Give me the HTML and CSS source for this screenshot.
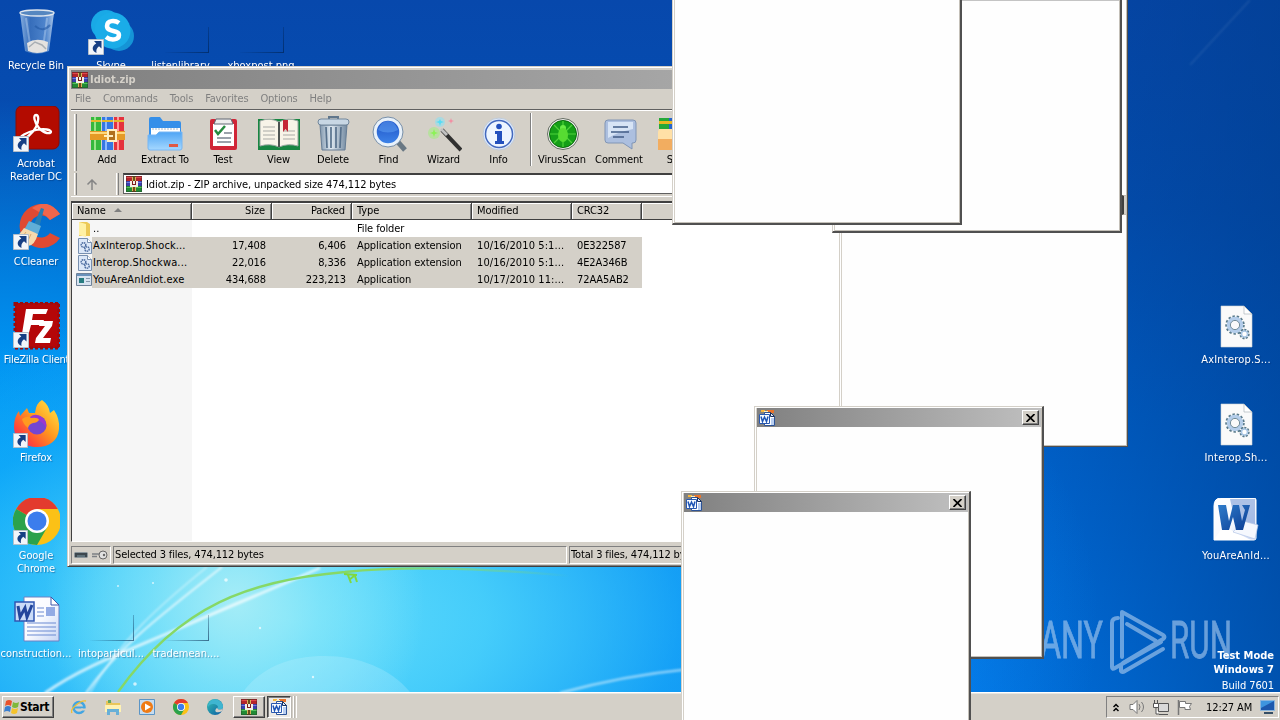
FILE: index.html
```html
<!DOCTYPE html>
<html lang="en">
<head>
	<meta charset="UTF-8">
	<title>Desktop</title>
	<link rel="stylesheet" href="styles.css">
</head>
<body>
	<!-- shared icons -->
	<svg class="defs" width="0" height="0">
		<defs>
			<linearGradient id="gBlue" x1="0" y1="0" x2="0" y2="1"><stop offset="0" stop-color="#4fa5f5"/><stop offset="1" stop-color="#a5d8ff"/></linearGradient>
			<linearGradient id="gMetal" x1="0" y1="0" x2="1" y2="0"><stop offset="0" stop-color="#8298ae"/><stop offset=".4" stop-color="#e0eaf2"/><stop offset="1" stop-color="#7289a0"/></linearGradient>
			<linearGradient id="gPage" x1="0" y1="0" x2="1" y2="1"><stop offset="0" stop-color="#fff"/><stop offset=".5" stop-color="#f8faff"/><stop offset="1" stop-color="#c5d4f4"/></linearGradient>
			<linearGradient id="gFire" x1="1" y1="0" x2="0" y2="1"><stop offset="0" stop-color="#fff04a"/><stop offset=".45" stop-color="#ff9a1f"/><stop offset=".75" stop-color="#ff4b37"/><stop offset="1" stop-color="#e31587"/></linearGradient>
			<linearGradient id="gW" x1="0" y1="0" x2="1" y2="1"><stop offset="0" stop-color="#2f7ccb"/><stop offset="1" stop-color="#0b3c93"/></linearGradient>
			<linearGradient id="gEdge" x1="0" y1="0" x2="1" y2="1"><stop offset="0" stop-color="#35c1b1"/><stop offset="1" stop-color="#0c59a4"/></linearGradient>
			<linearGradient id="gGlass" x1="0" y1="0" x2="1" y2="0"><stop offset="0" stop-color="#9dc0e8"/><stop offset=".3" stop-color="#3f74bd"/><stop offset=".75" stop-color="#5b8fd2"/><stop offset="1" stop-color="#c5daf2"/></linearGradient>
			<linearGradient id="gFind" x1="0" y1="0" x2="0" y2="1"><stop offset="0" stop-color="#1d4fc4"/><stop offset="1" stop-color="#3f86ea"/></linearGradient>
			<linearGradient id="gStem" x1="0" y1="0" x2="1" y2="0"><stop offset="0" stop-color="#86d866"/><stop offset=".6" stop-color="#86d866"/><stop offset="1" stop-color="#86d866" stop-opacity="0"/></linearGradient>
		</defs>
		<symbol id="rar" viewBox="0 0 16 16">
			<path fill="#b3242b" d="M0 0h16v5H0z"/><path fill="#3b3fae" d="M0 5h16v5H0z"/><path fill="#218a34" d="M0 10h16v6H0z"/>
			<path fill="#e0484c" d="M0 1h16v1H0z"/><path fill="#6f7be0" d="M0 6h16v1H0z"/><path fill="#54c25e" d="M0 11h16v1H0z"/>
			<path fill="#6d4c1e" d="M6 0h4v16H6z"/><path fill="#d9b458" d="M6 1h1v14H6zM9 1h1v14H9z"/>
			<path fill="#f3f0e5" d="M4 5h8v6H4z"/><path fill="#7d1a1d" d="M6 5h1v4H6zM9 5h1v4H9zM7 8h2v1H7z"/>
			<path fill="none" stroke="#252525" d="M.5.5h15v15H.5z" opacity=".3"/>
		</symbol>
		<symbol id="wdoc" viewBox="0 0 16 16">
			<path fill="#f6b73c" d="M2 0h4v2H2z"/><path fill="#e8742c" d="M8 0h7v3H8z"/><path fill="#fff1ba" d="M5 1h4v1H5z"/>
			<path fill="#fff" stroke="#2c5397" d="M5.500 2.500h6l4 4v9h-10z"/><path fill="#b9cff2" d="M12 8h3v7h-3z"/><path stroke="#17305f" fill="#dfe9fb" d="M11.500 2.500v4h4z"/>
			<path fill="#f9fcff" stroke="#2858b0" d="M.5 4.500h10v9H.5z"/><path fill="none" stroke="#1d54b5" stroke-width="1.500" d="M2 6.500l1.500 5L5.500 7l2 4.500L9 6.500"/>
		</symbol>
		<symbol id="arrow" viewBox="0 0 16 16">
			<path fill="#f2f5fa" stroke="#b5bec9" d="M.5.5h15v15h-15z"/>
			<path fill="#173f84" d="M6 2h7.500v7.500L11 7.200C8.500 9 8 11 8.500 14 3.500 11.500 3.500 7 8.300 4.400z"/>
		</symbol>
		<symbol id="gears" viewBox="12 0 48 48">
			<path fill="#fafafa" stroke="#cfd3d6" stroke-width=".6" d="M21 4h23l8 8v33H21z"/>
			<path fill="#fff" stroke="#aeb5ba" stroke-width=".7" d="M44 4v8h8z"/>
			<circle cx="35" cy="23" r="8" fill="none" stroke="#58798a" stroke-width="3.500" stroke-dasharray="2.200 1.700"/>
			<circle cx="35" cy="23" r="6.500" fill="none" stroke="#b4cdea" stroke-width="3.500"/>
			<circle cx="35" cy="23" r="4.600" fill="none" stroke="#567482" stroke-width=".8"/>
			<circle cx="44.500" cy="32" r="3.700" fill="#fff" stroke="#58798a" stroke-width="3" stroke-dasharray="1.800 1"/>
			<circle cx="44.500" cy="32" r="3" fill="#fff" stroke="#a9c6e4" stroke-width="1.500"/>
		</symbol>
		<symbol id="chrome" viewBox="0 0 48 48">
			<circle cx="24" cy="24" r="24" fill="#fbc116"/>
			<path fill="#e33b2e" d="M24 24L3.200 12A24 24 0 0 1 44.800 12H24z"/>
			<path fill="#2ba24c" d="M24 24L3.200 12A24 24 0 0 0 24 48l10.400-18z"/>
			<circle cx="24" cy="24" r="12" fill="#fff"/><circle cx="24" cy="24" r="9.500" fill="#3b7ded"/>
		</symbol>
		<symbol id="dll" viewBox="0 0 14 16">
			<path fill="#dce8f8" stroke="#7890b0" d="M.5.5h9l4 4v11H.5z"/><path fill="#fff" stroke="#7890b0" d="M9.500.5v4h4"/>
			<circle cx="5.500" cy="7" r="2.300" fill="none" stroke="#4d6da0" stroke-width="1.500" stroke-dasharray="1.400 .6"/><circle cx="9" cy="11" r="2.200" fill="none" stroke="#4d6da0" stroke-width="1.500" stroke-dasharray="1.400 .6"/>
		</symbol>
	</svg>

	<div class="desktop">
		<!-- wallpaper light streaks -->
		<svg class="streaks" width="1280" height="692" viewBox="0 0 1280 692">
			<defs><filter id="soft"><feGaussianBlur stdDeviation=".8"/></filter></defs>
			<g fill="none" stroke="#fff" filter="url(#soft)">
				<path d="M45 693C85 665 130 650 180 628S270 590 320 568" stroke-width="3" opacity=".7"/>
				<path d="M86 693C120 645 165 612 222 567" stroke-width="2" opacity=".7"/>
				<path d="M90 693C120 640 160 605 207 567" stroke-width="1.500" opacity=".5"/>
				<path d="M560 693C600 682 640 674 690 669" stroke-width="2.500" opacity=".5"/>
				<path d="M1190 65L1250 0" stroke-width="2" opacity=".08"/>
			</g>
			<path d="M243 692C262 666 292 656 325 656S390 668 410 692z" fill="#d5f8ff" opacity=".22"/>
			<path d="M118 692C180 605 250 580 345 572 400 566 470 567 570 576" fill="none" stroke="url(#gStem)" stroke-width="2.300"/>
			<path d="M344 574l13 1M348 575l3 8M355 576l2 6M349 580l5-4" stroke="#80d83e" stroke-width="2"/>
			<g fill="#fff" opacity=".7"><circle cx="226" cy="580" r="1.800"/><circle cx="118" cy="586" r="1"/><circle cx="135" cy="684" r="1.800"/><circle cx="153" cy="583" r="1"/><circle cx="260" cy="628" r="1.200"/><circle cx="313" cy="677" r="1.200"/></g>
		</svg>

		<div class="icons col1">
			<div class="item">
				<svg class="pic" viewBox="0 0 48 48">
					<path d="M7 4l5 38q11 6 24 0l5-38q-16-5-34 0z" transform="translate(1 1)" fill="url(#gGlass)" opacity=".85"/>
					<path d="M14 34q9-6 21-1l-1 9q-10 4-19 0z" transform="translate(1 1)" fill="#e4e2df"/><path d="M17 39l6-5 7 3 4 4" fill="none" stroke="#a8aeb3" stroke-width="1.500"/>
					<ellipse cx="25" cy="5" rx="17" ry="3" fill="#5687c0" stroke="#dfe6ee" stroke-width="1.400"/>
					<path d="M14 10l4 26M35 10l-3 23" stroke="#dcebfb" opacity=".35" stroke-width="2"/>
					<path d="M23 18q8 7 15-1" fill="none" stroke="#2258a5" opacity=".6" stroke-width="2"/>
				</svg>
				<span>Recycle Bin</span>
			</div>
			<div class="item">
				<svg class="pic" viewBox="0 0 48 48">
					<rect x="4" y="0" width="43" height="43" rx="6" fill="#b30b00" stroke="#8c0a02"/>
					<path d="M24 9c3 0 3 6 0 12S12 35 9 33s6-7 15-9 15 0 15 2-7 2-12-4-6-13-3-13z" fill="none" stroke="#fff" stroke-width="2.300"/>
					<use href="#arrow" x="1" y="30" width="16" height="16"/>
				</svg>
				<span>Acrobat<br>Reader DC</span>
			</div>
			<div class="item">
				<svg class="pic" viewBox="0 0 48 48">
					<path d="M48 10A22 22 0 1 0 48 34L38 29A11 11 0 1 1 38 16z" fill="#e04a32"/>
					<path d="M48 10Q36-7 20 4l14 8 4 4z" fill="#f0664c"/>
					<path d="M29 4l3 1-6 23-6-3z" fill="#277db2"/><path d="M17 17l12 5-3 8-14-4z" fill="#60aed7"/>
					<path d="M12 24l14 6q-4 13-11 12L3 34q4-3 9-10z" fill="#f6d9ac"/><path d="M14 28l-6 8M19 30l-4 9" stroke="#dba96c"/>
					<use href="#arrow" x="1" y="30" width="16" height="16"/>
				</svg>
				<span>CCleaner</span>
			</div>
			<div class="item">
				<svg class="pic" viewBox="0 0 48 48">
					<rect x="3" y="1" width="44" height="45" fill="#b50709" stroke="#980c0e" stroke-width="3" stroke-dasharray="3 2"/>
					<path d="M14 7h22l-2 5H21l-1 6h12l-2 5H19l-4 15H9z" fill="#fff"/><path d="M28 19h13l-1 5-9 12h8l-1 5H23l1-5 9-12h-6z" fill="#fff"/>
					<use href="#arrow" x="1" y="30" width="16" height="16"/>
				</svg>
				<span class="tight">FileZilla Client</span>
			</div>
			<div class="item">
				<svg class="pic" viewBox="0 0 48 48">
					<path d="M30 0q7 5 8 13l4-3q6 9 5 19c-1 12-10 18-22 18S2 40 2 27q0-10 5-16l1 5 7-8 2 5 6 0Q24 3 30 0z" fill="url(#gFire)"/>
					<circle cx="25" cy="25" r="9.500" fill="#7446d1"/><path d="M18 17q6-5 13 1 4 5 3 10-4-8-11-8l-7 4z" fill="#9b37cf"/>
					<path d="M10 19q6-4 9-1 7-1 8 2-2 3-6 3-4 1-5 5-5-4-6-9z" fill="#ff9a20"/>
					<use href="#arrow" x="1" y="33" width="15" height="15"/>
				</svg>
				<span>Firefox</span>
			</div>
			<div class="item">
				<svg class="pic" viewBox="0 0 48 48"><use href="#chrome" x="1" y="-1" width="48" height="48"/><use href="#arrow" x="1" y="32" width="15" height="15"/></svg>
				<span>Google<br>Chrome</span>
			</div>
			<div class="item">
				<svg class="pic" viewBox="0 0 48 48">
					<path d="M12 1h27l8 8v36H12z" fill="url(#gPage)" stroke="#6f81c4"/><path d="M39 1v8h8z" fill="#fff" stroke="#3d57a8"/>
					<path d="M25 12h7M25 16h7M25 20h7M15 27h29M15 31h29M15 35h29M15 39h29" stroke="#6a8ad2" stroke-width="1.200"/><path d="M34 11h9v9h-9z" fill="#93abe4"/>
					<path d="M3 6h19v19H3z" fill="#cbdcf8" stroke="#3157b3" stroke-width="1.500"/><path d="M6 10l2 11 5-9 2 9 5-12" fill="none" stroke="#23469c" stroke-width="3"/>
				</svg>
				<span class="wide">construction...</span>
			</div>
		</div>
		<div class="icons col2">
			<div class="item">
				<svg class="pic" viewBox="0 0 48 48">
					<circle cx="19" cy="17" r="15" fill="#19a9e6"/><circle cx="32" cy="28" r="15" fill="#1594d6"/><circle cx="25.500" cy="22.500" r="18" fill="#1aace8"/>
					<path d="M32 15c-4-3-12-3-12 3 0 7 12 3 12 9 0 5-8 6-13 2" fill="none" stroke="#fff" stroke-width="4.500"/>
					<use href="#arrow" x="1" y="31" width="16" height="16"/>
				</svg>
				<span>Skype</span>
			</div>
			<div class="item last"><i class="ghost"></i><span class="wide">intoparticul...</span></div>
		</div>
		<div class="icons col3">
			<div class="item"><i class="ghost"></i><span class="wide">listenlibrary....</span></div>
			<div class="item last"><i class="ghost"></i><span class="wide">trademean....</span></div>
		</div>
		<div class="icons col4">
			<div class="item"><i class="ghost"></i><span class="wide">xboxpost.png</span></div>
		</div>
		<div class="icons right">
			<div class="item"><svg class="pic"><use href="#gears" width="48" height="48"/></svg><span class="far">AxInterop.S...</span></div>
			<div class="item"><svg class="pic"><use href="#gears" width="48" height="48"/></svg><span class="far">Interop.Sh...</span></div>
			<div class="item">
				<svg class="pic" viewBox="0 0 48 48">
					<path d="M9 0h33q2 0 2 2v38q0 2-2 2H2V8q0-8 7-8z" fill="url(#gPage)" stroke="#fff"/><path d="M18 1h25v31H25z" fill="#8ca8dc" opacity=".7"/>
					<path d="M2 42l9-14 28 14z" fill="#fff"/><path d="M31 23l15 4-3 14-22-7z" fill="#f5f8fe" stroke="#b4c5e7" stroke-width=".7"/>
					<path d="M6 7h8l3 16 4-16h6l3 16 3-11-3-5h8l-7 25h-7l-3-13-4 13h-7z" fill="url(#gW)"/>
				</svg>
				<span class="far">YouAreAnId...</span>
			</div>
		</div>

		<!-- watermark -->
		<svg class="brand" width="200" height="70" viewBox="0 0 200 70">
			<text x="0" y="53" textLength="63" lengthAdjust="spacingAndGlyphs">ANY</text>
			<text x="130" y="53" textLength="62" lengthAdjust="spacingAndGlyphs">RUN</text>
			<g fill="none" stroke-width="4" stroke-linejoin="round" stroke-linecap="round">
				<path d="M78 13q-6 0-6 5v44q0 3 3 1l46-26"/><path d="M82 52V7l41 23q3 2 0 4L83 58"/><path d="M87 19l29 17"/><path d="M81 61v5q1 2 4 0l38-22"/>
			</g>
		</svg>
		<div class="build"><b>Test Mode</b><b>Windows 7</b><span>Build 7601</span></div>
	</div>

	<!-- archive manager -->
	<div class="archive">
		<div class="titlebar"><svg width="16" height="16"><use href="#rar"/></svg><b>Idiot.zip</b></div>
		<div class="menu"><span>File</span><span>Commands</span><span>Tools</span><span>Favorites</span><span>Options</span><span>Help</span></div>
		<div class="toolbar">
			<i class="grip"></i>
			<div class="tool w58">
				<svg viewBox="-1 0 36 36"><path fill="#35b83c" d="M1 1h10v33H1z"/><path fill="#3577e2" d="M12 1h11v33H12z"/><path fill="#e5323d" d="M24 1h10v33H24z"/><path fill="#96e488" d="M4 1h2v33H4z"/><path fill="#89b8ff" d="M15 1h2v33h-2z"/><path fill="#ff9899" d="M27 1h2v33h-2z"/><path fill="#e5b729" d="M1 4h10v2H1zM12 4h11v2H12zM24 4h10v2H24z"/><path fill="#e59a26" d="M0 15h35v9H0z"/><path fill="#ffd87c" d="M0 16h35v2H0z"/><path fill="#b0701e" stroke="#fff0c0" stroke-width="2" d="M18 14h8v11h-8z"/><path d="M14 20h9" stroke="#fff0c0" stroke-width="2"/></svg>
				<span>Add</span>
			</div>
			<div class="tool w58">
				<svg viewBox="-1 0 36 36"><path fill="#358fe9" d="M1 3q0-2 2-2h9l3 4h16q2 0 2 2v20H1z"/><path fill="#fff" d="M3 12h29v8H3z"/><path d="M4 13h27" stroke="#a9bacb" stroke-dasharray="2 1"/><path fill="url(#gBlue)" stroke="#76b6f4" d="M0 19h8l3-3h23v16q0 2-2 2H2q-2 0-2-2z"/><path fill="#df5944" d="M21 28h9v3h-9z"/></svg>
				<span>Extract To</span>
			</div>
			<div class="tool w58">
				<svg viewBox="0 0 36 36"><rect x="5" y="3" width="27" height="31" rx="2" fill="#d02637"/><path fill="#fff" d="M8 8h21v22H8z"/><path fill="#eee" stroke="#626974" d="M11 3h15l2 5H9z"/><path d="M10 14l3 4 7-8" fill="none" stroke="#258a3f" stroke-width="2.500"/><path d="M19 17h8M12 22h14M12 26h14" stroke="#7b8490" stroke-width="1.300"/></svg>
				<span>Test</span>
			</div>
			<div class="tool w53">
				<svg class="wide" viewBox="0 0 42 36"><path fill="#188642" d="M0 3h42v31H0z"/><path fill="#f8f4e8" stroke="#9da8a3" d="M2 5q10-4 19 1v25q-9-4-19-1zM40 5q-10-4-19 1v25q9-4 19-1z"/><path d="M5 11h12M5 15h12M5 19h12M5 23h12M25 19h12M25 23h12M25 15h12" stroke="#a9aaa6"/><path d="M21 6v25" stroke="#4e5452" stroke-width="2"/><path fill="#c52737" d="M25 4h5v12l-2.500-3L25 16z"/></svg>
				<span>View</span>
			</div>
			<div class="tool w56">
				<svg viewBox="0 0 36 36"><path d="M14 3V1h9v2" fill="none" stroke="#60768b" stroke-width="2"/><path fill="url(#gMetal)" stroke="#667d95" d="M5 9h27l-2 25H7z"/><path d="M11 11l1 21M16 11v21M21 11v21M26 11l-1 21" stroke="#57718c" stroke-width="1.700"/><rect x="3" y="3" width="31" height="6" rx="3" fill="#c8d7e4" stroke="#72879b"/></svg>
				<span>Delete</span>
			</div>
			<div class="tool w55">
				<svg viewBox="0 0 36 36"><path d="M26 25l8 9" stroke="#697884" stroke-width="5"/><circle cx="17" cy="16" r="13" fill="url(#gFind)" stroke="#e8f1fa" stroke-width="3.500"/><circle cx="17" cy="16" r="15" fill="none" stroke="#7890ab"/><path d="M7 14q10 5 20 0-3-9-10-9T7 14z" fill="#72b6ff" opacity=".4"/></svg>
				<span>Find</span>
			</div>
			<div class="tool w55">
				<svg viewBox="0 0 36 36"><path d="M16 14l19 20" stroke="#303030" stroke-width="4"/><path d="M15 13l6 6" stroke="#c2c2c2" stroke-width="3"/><circle cx="8" cy="17" r="6" fill="#9bf176" opacity=".5"/><circle cx="14" cy="6" r="5" fill="#7fe4fa" opacity=".5"/><path d="M8 13l1 3 3 1-3 1-1 3-1-3-3-1 3-1z" fill="#8bf356"/><path d="M14 3l1 2 3 1-3 1-1 3-1-3-3-1 3-1z" fill="#55dbf5"/><path d="M25 2l.7 2.300L28 5l-2.300.7L25 8l-.7-2.300L22 5l2.300-.7z" fill="#f58aa0"/></svg>
				<span>Wizard</span>
			</div>
			<div class="tool w55">
				<svg viewBox="0 0 36 36"><circle cx="18" cy="18" r="16" fill="#dce8fa" stroke="#bfcbd9"/><circle cx="18" cy="18" r="13.500" fill="#edf5ff" stroke="#4369be" stroke-width="1.500"/><circle cx="18" cy="10.500" r="2.800" fill="#2250bd"/><path d="M14 15h7v10h2v3h-9v-3h2v-7h-2z" fill="#2250bd"/></svg>
				<span>Info</span>
			</div>
			<i class="sep"></i>
			<div class="tool w56">
				<svg viewBox="-1 0 36 36"><circle cx="18" cy="18" r="15.500" fill="#eee" stroke="#656d62"/><circle cx="18" cy="18" r="13.500" fill="#159f18" stroke="#086d0b"/><path d="M18 5v26M5 18h26M9 9l18 18M27 9L9 27" stroke="#4fd33a" stroke-width="1.200"/><circle cx="18" cy="12" r="3" fill="#68eb45"/><ellipse cx="18" cy="19" rx="5" ry="7" fill="#57dc32"/></svg>
				<span>VirusScan</span>
			</div>
			<div class="tool w58">
				<svg viewBox="-1 0 36 36"><path d="M6 4h25q3 0 3 3v17q0 3-3 3h-1v6l-9-6H6q-3 0-3-3V7q0-3 3-3z" fill="#acbfdf" stroke="#8095b5"/><path d="M6 6h25v7q-15 3-25 9z" fill="#d7e4f5"/><path d="M11 11h15M9 16h18M11 21h11" stroke="#425c86" stroke-width="1.700"/></svg>
				<span>Comment</span>
			</div>
			<div class="tool w56">
				<svg viewBox="2 0 36 36"><path fill="#25a83a" d="M3 2h12v15H3z"/><path fill="#2665ce" d="M13 2h10v15H13z"/><path fill="#d5333e" d="M23 2h9v15h-9z"/><path fill="#e9b721" d="M3 5h29v3H3z"/><path fill="#f2ad60" d="M1 17h32v17H1z"/><path fill="#ffe0a6" d="M3 13l-4 10h31l3-10z"/></svg>
				<span>SFX</span>
			</div>
		</div>
		<div class="address">
			<i class="grip"></i><div class="up">
				<svg width="12" height="11" viewBox="0 0 12 11"><path d="M6 11V1M1.500 5.500L6 1l4.500 4.500" fill="none" stroke="#858585" stroke-width="1.500"/></svg>
			</div><i class="grip"></i>
			<div class="path"><svg width="16" height="16"><use href="#rar"/></svg><span>Idiot.zip - ZIP archive, unpacked size 474,112 bytes</span></div>
		</div>
		<div class="list">
			<div class="row head"><span>Name <i class="sort"></i></span><span class="num">Size</span><span class="num">Packed</span><span>Type</span><span>Modified</span><span>CRC32</span><span></span></div>
			<div class="row"><span class="name"><svg width="14" height="16" viewBox="0 0 14 16"><path fill="#ecc957" d="M1 1h8l3 2v12H1z"/><path fill="#fff1a5" d="M1 1l7 2v13l-7-2z"/></svg><em>..</em></span><span></span><span></span><span>File folder</span><span></span><span></span></div>
			<div class="row sel"><span class="name"><svg width="14" height="16"><use href="#dll"/></svg><em>AxInterop.Shock...</em></span><span class="num">17,408</span><span class="num">6,406</span><span>Application extension</span><span class="date">10/16/2010 5:1...</span><span>0E322587</span></div>
			<div class="row sel"><span class="name"><svg width="14" height="16"><use href="#dll"/></svg><em>Interop.Shockwa...</em></span><span class="num">22,016</span><span class="num">8,336</span><span>Application extension</span><span class="date">10/16/2010 5:1...</span><span>4E2A346B</span></div>
			<div class="row sel"><span class="name"><svg width="16" height="14" viewBox="0 0 16 14"><path fill="#d7e3f0" stroke="#6f8299" d="M.5.5h15v12H.5z"/><path fill="#6a92bb" d="M1 1h14v2H1z"/><path fill="#287c80" d="M3 5h5v5H3z"/><path stroke="#8699ad" d="M10 5.500h4M10 8.500h4"/></svg><em>YouAreAnIdiot.exe</em></span><span class="num">434,688</span><span class="num">223,213</span><span>Application</span><span class="date">10/17/2010 11:...</span><span>72AA5AB2</span></div>
			<div class="fill"></div>
		</div>
		<div class="status">
			<div class="pane small"><svg width="34" height="12" viewBox="0 0 34 12"><rect x=".5" y="3.500" width="13" height="5" rx="1" fill="#3d474e" stroke="#8b969c"/><path d="M3 7h8" stroke="#7f9aa3"/><path d="M18 5h7M18 7.500h5" stroke="#7c8084" stroke-width="1.500"/><circle cx="29" cy="6" r="4" fill="#e1e1e1" stroke="#666"/><circle cx="30" cy="6" r="1.200" fill="#666"/></svg></div>
			<div class="pane mid">Selected 3 files, 474,112 bytes</div>
			<div class="pane end">Total 3 files, 474,112 bytes</div>
		</div>
	</div>

	<div class="taskbar">
		<div class="start">
			<svg width="17" height="16" viewBox="0 0 17 16"><path fill="#e9522b" d="M3 2q3-2 6 0L8 7Q5 5 2 7z"/><path fill="#7fb83a" d="M10 3q3 2 6 0l-1 5q-3 2-6 0z"/><path fill="#3a7fd0" d="M2 8q3-2 6 0l-1 5q-3-2-6 0z"/><path fill="#f5c32b" d="M9 9q3 2 6 0l-1 5q-3 2-6 0z"/></svg>
			<b>Start</b>
		</div>
		<div class="quick">
			<svg viewBox="0 0 16 16"><circle cx="8" cy="8.500" r="5.500" fill="none" stroke="#42a5e2" stroke-width="2.500"/><path d="M3 8.500h10" stroke="#42a5e2" stroke-width="2"/><path d="M10 9.500h5v2h-5z" fill="#d4d0c8"/><path d="M1 14q-2-3 4-8t10-4" fill="none" stroke="#efbf35" stroke-width="1.300"/></svg>
			<svg viewBox="0 0 16 16"><path fill="#e9c65a" d="M1 2h5l1 2h8v9H1z"/><path fill="#fff2b3" d="M0 6h16v7H0z"/><path fill="#67afd7" d="M2 10h12v6h-3v-3H5v3H2z"/><path fill="#61a75c" d="M3 1h3v3H3z"/></svg>
			<svg viewBox="0 0 16 16"><path fill="#c7dcef" stroke="#5b95c6" d="M.5.5h15v15H.5z"/><circle cx="8" cy="8" r="6" fill="#ef7b15"/><path fill="#fff" d="M6 4.500l6 3.500-6 3.500z"/></svg>
			<svg viewBox="0 0 16 16"><use href="#chrome" width="16" height="16"/></svg>
			<svg viewBox="0 0 16 16"><circle cx="8" cy="8" r="8" fill="url(#gEdge)"/><path d="M4 1.500Q8-1 12 1.500t4 6q0 3-3 3-3 0-2-2 0-3-4-3.500T1 8q0-4 3-6.500z" fill="#3fb5d0"/><path d="M10.500 8.500q-.5 2 2.500 2 2 0 3-1.500l-1 3q-3 2-6 1-2-2 1.500-4.500z" fill="#d4d0c8"/></svg>
		</div>
		<div class="task"><svg width="16" height="16"><use href="#rar"/></svg></div>
		<div class="task active"><svg width="16" height="16"><use href="#wdoc"/></svg></div>
		<i class="bar"></i><i class="bar"></i>
		<div class="tray">
			<svg width="6" height="9" viewBox="0 0 6 9"><path d="M.5 4L3 1.500 5.500 4M.5 8L3 5.500 5.500 8" fill="none" stroke="#000" stroke-width="1.500"/></svg>
			<svg width="16" height="14" viewBox="0 0 16 14"><path d="M1 4.500h3l4-4v13l-4-4H1z" fill="#fff" stroke="#777"/><path d="M10 4q2 3 0 6M12.500 2q4 5 0 10" fill="none" stroke="#777"/></svg>
			<svg width="16" height="15" viewBox="0 0 16 15"><path d="M5.500 3.500h10v8h-10z" fill="#d9d9d9" stroke="#555"/><path d="M6 14.500h9M1.500 0v4M4.500 0v4M.5 3.500h5v4h-5zM3 8v6h3" fill="#fff" stroke="#555"/></svg>
			<svg width="16" height="15" viewBox="0 0 16 15"><path d="M1.500 0v15" stroke="#777" stroke-width="1.500"/><path d="M2.500 1.500h6v2h6l-2 3 1 3H8v-2H2.500z" fill="#fff" stroke="#777"/></svg>
			<span>12:27 AM</span>
			<svg width="15" height="14" viewBox="0 0 15 14"><path fill="#1d58ad" stroke="#8bb5dc" d="M.5.5h14v10H.5z"/><path fill="#3e95df" d="M1 1h13L1 8z"/><path fill="#354e66" d="M4 12h9v2H4z"/></svg>
		</div>
	</div>

	<!-- popups, back to front -->
	<div class="popup p1"><i class="edge"></i></div>
	<div class="popup p2"></div>
	<div class="popup p3"></div>
	<div class="popup p4">
		<div class="ptitle"><svg width="16" height="16"><use href="#wdoc"/></svg><i class="close"><svg width="9" height="8" viewBox="0 0 9 8"><path d="M.5 0l8 8M8.500 0l-8 8" stroke="#000" stroke-width="1.700"/></svg></i></div>
	</div>
	<div class="popup p5">
		<div class="ptitle"><svg width="16" height="16"><use href="#wdoc"/></svg><i class="close"><svg width="9" height="8" viewBox="0 0 9 8"><path d="M.5 0l8 8M8.500 0l-8 8" stroke="#000" stroke-width="1.700"/></svg></i></div>
	</div>
</body>
</html>
```
FILE: styles.css
```css
*{
	padding:0;
	margin:0;
	box-sizing:border-box;
}
body{
	width:1280px;
	height:720px;
	overflow:hidden;
	position:relative;
	font-family:"DejaVu Sans Condensed","DejaVu Sans",sans-serif;
	font-size:11px;
	line-height:13px;
	letter-spacing:-0.1px;
	color:#000;
	white-space:nowrap;
}
b{
	letter-spacing:.2px;
}
svg{
	display:block;
	flex:none;
}
i,em{
	font-style:normal;
	flex:none;
}
.defs{
	position:absolute;
}
.desktop{
	position:absolute;
	left:0;
	top:0;
	width:1280px;
	height:692px;
	overflow:hidden;
	background:
		radial-gradient(ellipse 190px 200px at 235px 600px, rgba(178,240,246,.85) 0%, rgba(150,235,248,.55) 45%, rgba(110,220,250,0) 100%),
		radial-gradient(ellipse 560px 320px at 290px 620px, rgba(100,222,252,1) 0%, rgba(75,212,251,.85) 35%, rgba(25,175,250,.55) 70%, rgba(0,150,240,0) 100%),
		radial-gradient(ellipse 620px 420px at 480px 620px, rgba(35,165,250,.95) 0%, rgba(15,145,245,.7) 45%, rgba(0,120,230,0) 100%),
		radial-gradient(ellipse 500px 420px at 0 520px, #00a8f8 0%, rgba(0,152,245,.9) 40%, rgba(0,110,220,0) 100%),
		linear-gradient(90deg, rgba(0,60,140,0) 75%, rgba(0,60,140,.6) 100%),
		linear-gradient(180deg, #0748ac 0%, #0450b4 30%, #0062cc 60%, #0074e4 100%);
}
.streaks{
	position:absolute;
	left:0;
	top:0;
}
.icons{
	position:absolute;
	top:8px;
	width:72px;
	height:684px;
	display:flex;
	flex-direction:column;
	color:#fff;
	text-shadow:1px 1px 1px rgba(0,30,80,.4);
}
.col1{ left:0; }
.col2{ left:75px; }
.col3{ left:150px; }
.col4{ left:225px; }
.right{
	left:1200px;
	top:302px;
	height:auto;
}
.item{
	height:98px;
	flex:none;
	display:flex;
	flex-direction:column;
	align-items:center;
	text-align:center;
}
.item.last{
	margin-top:490px;
}
.pic{
	width:48px;
	height:48px;
	margin-bottom:3px;
}
.item .wide{
	letter-spacing:0;
}
.item .far{
	letter-spacing:.2px;
}
.item .tight{
	letter-spacing:-.25px;
	padding-left:1px;
}
.ghost{
	width:44px;
	height:26px;
	margin:19px 0 6px 2px;
	border:solid rgba(0,30,70,.4);
	border-width:0 1px 1px 0;
	border-image:linear-gradient(135deg, transparent 35%, rgba(0,30,70,.6)) 1;
}
.brand{
	position:absolute;
	left:1040px;
	top:605px;
	opacity:.6;
	overflow:visible;
}
.brand text{
	font-family:Roboto,sans-serif;
	font-size:52px;
	letter-spacing:0;
	fill:#b0cff0;
	stroke:#b0cff0;
	stroke-width:.8px;
}
.brand g{
	stroke:#b0cff0;
}
.build{
	position:absolute;
	right:6px;
	top:649px;
	display:flex;
	flex-direction:column;
	align-items:flex-end;
	color:#fff;
	line-height:14px;
}
.build b{
	letter-spacing:0;
}
.build span{
	margin-top:2px;
}

/* archive window */
.archive{
	position:absolute;
	left:67px;
	top:66px;
	width:900px;
	height:501px;
	padding:2px 2px 1px 3px;
	background:#d4d0c8;
	border:1px solid #d4d0c8;
	border-right-color:#404040;
	border-bottom-color:#404040;
	box-shadow:inset 1px 1px #fff,inset -1px -1px #808080;
	display:flex;
	flex-direction:column;
}
.titlebar{
	height:19px;
	margin-top:1px;
	padding-left:1px;
	display:flex;
	align-items:center;
	gap:2px;
	background:linear-gradient(90deg,#808080,#b8b8b8);
	color:#d4d0c8;
}
.titlebar b{
	letter-spacing:0;
}
.menu{
	height:20px;
	display:flex;
	align-items:center;
	gap:12px;
	padding:0 0 2px 4px;
	color:#808080;
	letter-spacing:-.15px;
}
.toolbar{
	height:64px;
	padding-top:3px;
	border-top:1px solid #606060;
	box-shadow:inset 0 1px #fff;
	display:flex;
	overflow:hidden;
}
.grip{
	width:3px;
	border-left:1px solid #fff;
	border-right:1px solid #808080;
}
.toolbar .grip{
	height:57px;
	margin:1px 1px 0 3px;
}
.tool{
	flex:none;
	display:flex;
	flex-direction:column;
	align-items:center;
}
.tool svg{
	width:36px;
	height:36px;
	margin:3px 0 1px;
}
.tool svg.wide{
	width:42px;
}
.w53{ width:53px; }
.w55{ width:55px; }
.w56{ width:56px; }
.w58{ width:58px; }
.sep{
	width:2px;
	height:53px;
	margin:0 2px 0 4px;
	border-left:1px solid #808080;
	border-right:1px solid #fff;
}
.address{
	height:24px;
	display:flex;
	align-items:stretch;
	border-bottom:1px solid #fff;
	padding:0 0 1px 3px;
}
.up{
	width:39px;
	display:flex;
	align-items:center;
	justify-content:center;
	padding-right:10px;
}
.path{
	flex:1;
	margin-left:4px;
	background:#fff;
	border:1px solid #606060;
	border-top:2px solid #404040;
	height:21px;
	padding-left:2px;
	display:flex;
	align-items:center;
	gap:4px;
}
.list{
	flex:1;
	min-height:0;
	margin-top:4px;
	border:1px solid #404040;
	border-top-width:2px;
	border-bottom:1px solid #fff;
	background:#fff;
	display:flex;
	flex-direction:column;
}
.row{
	height:17px;
	width:570px;
	flex:none;
	display:grid;
	grid-template-columns:120px 80px 80px 120px 100px 70px;
	align-items:center;
}
.row>span{
	padding:0 6px 0 5px;
	overflow:hidden;
}
.row .num{
	text-align:right;
}
.row .date{
	letter-spacing:.1px;
	padding-right:0;
}
.head{
	width:auto;
	grid-template-columns:120px 80px 80px 120px 100px 70px 1fr;
	align-items:stretch;
	background:#d4d0c8;
	border-bottom:1px solid #404040;
	line-height:16px;
}
.head>span{
	border-right:1px solid #404040;
	box-shadow:inset 1px 1px #fff,inset -1px 0 #808080;
}
.sort{
	display:inline-block;
	border:4px solid transparent;
	border-top:0;
	border-bottom-color:#808080;
	margin:0 0 2px 5px;
}
.row .name{
	height:17px;
	padding:0 0 0 6px;
	background:#f6f6f6;
	display:flex;
	align-items:center;
}
.name em{
	flex:1;
	line-height:17px;
	padding-left:1px;
	letter-spacing:.13px;
}
.sel{
	background:#d4d0c8;
}
.sel .name em{
	background:#d4d0c8;
}
.row.sel:nth-child(5) .name{
	padding-left:4px;
}
.fill{
	flex:1;
	width:120px;
	background:#f6f6f6;
}
.status{
	height:23px;
	padding-top:4px;
	display:flex;
	gap:2px;
}
.pane{
	height:18px;
	border:1px solid #808080;
	border-right-color:#fff;
	border-bottom-color:#fff;
	line-height:15px;
	padding-left:1px;
	letter-spacing:-.15px;
}
.small{
	width:40px;
	padding:2px 0 0 2px;
}
.mid{
	width:454px;
}
.end{
	flex:1;
}

/* taskbar */
.taskbar{
	position:absolute;
	left:0;
	top:692px;
	width:1280px;
	height:28px;
	background:#d4d0c8;
	border-top:1px solid #fff;
	box-shadow:inset 0 1px #e8e6e1;
	padding:3px 2px 2px;
	display:flex;
}
.start,.task{
	height:22px;
	border:1px solid #fff;
	border-right-color:#404040;
	border-bottom-color:#404040;
	box-shadow:inset -1px -1px #808080;
	display:flex;
	align-items:center;
}
.start{
	width:52px;
}
.start b{
	font-size:12px;
	letter-spacing:-.3px;
}
.quick{
	width:179px;
	padding-left:17px;
	display:flex;
	align-items:center;
	gap:18px;
}
.quick svg{
	width:16px;
	height:16px;
}
.task{
	width:32px;
	justify-content:center;
	margin-right:2px;
}
.task.active{
	width:24px;
	border-color:#404040 #fff #fff #404040;
	box-shadow:inset 1px 1px #808080;
	background:#eceae6;
	margin-right:0;
}
.bar{
	width:3px;
	height:22px;
	border-right:1px solid #fff;
	border-left:1px solid #b9b6b0;
}
.tray{
	width:173px;
	height:22px;
	margin-left:auto;
	border:1px solid #808080;
	border-right-color:#fff;
	border-bottom-color:#fff;
	display:flex;
	align-items:center;
	padding-left:6px;
	gap:8px;
	margin-right:-1px;
}
.tray svg:first-child{
	margin-right:2px;
}
.tray span{
	margin-left:5px;
	width:46px;
}

/* popups */
.popup{
	position:absolute;
	width:290px;
	height:253px;
	padding:1px 1px 1px 2px;
	background:#fefefe;
	border:1px solid #d4d0c8;
	border-right:2px solid #505050;
	border-bottom:2px solid #505050;
	box-shadow:inset 1px 1px #fff,inset 2px 0 #d4d0c8,inset -1px -1px #c4c0b8;
}
.p1{
	left:839px;
	top:-20px;
	height:467px;
	width:289px;
	border-right-width:1px;
	border-bottom-width:1px;
}
.p2{
	left:832px;
	top:-20px;
}
.p2::before{
	content:"";
	display:block;
	height:1px;
	margin-top:18px;
	background:#c4c4c4;
}
.p3{
	left:672px;
	top:-28px;
}
.p4{
	left:754px;
	top:406px;
}
.p5{
	left:681px;
	top:491px;
}
.edge{
	position:absolute;
	right:0;
	top:214px;
	width:5px;
	height:20px;
	border:1px solid #c4c0b8;
	border-left:2px solid #404040;
	background:#d4d0c8;
}
.ptitle{
	height:19px;
	display:flex;
	align-items:center;
	justify-content:space-between;
	padding:0 2px;
	background:linear-gradient(90deg,#808080,#c0c0c0);
}
.close{
	width:17px;
	height:15px;
	background:#d4d0c8;
	border:1px solid #fff;
	border-right-color:#404040;
	border-bottom-color:#404040;
	box-shadow:inset -1px -1px #808080;
	display:flex;
	align-items:center;
	justify-content:center;
}
```
